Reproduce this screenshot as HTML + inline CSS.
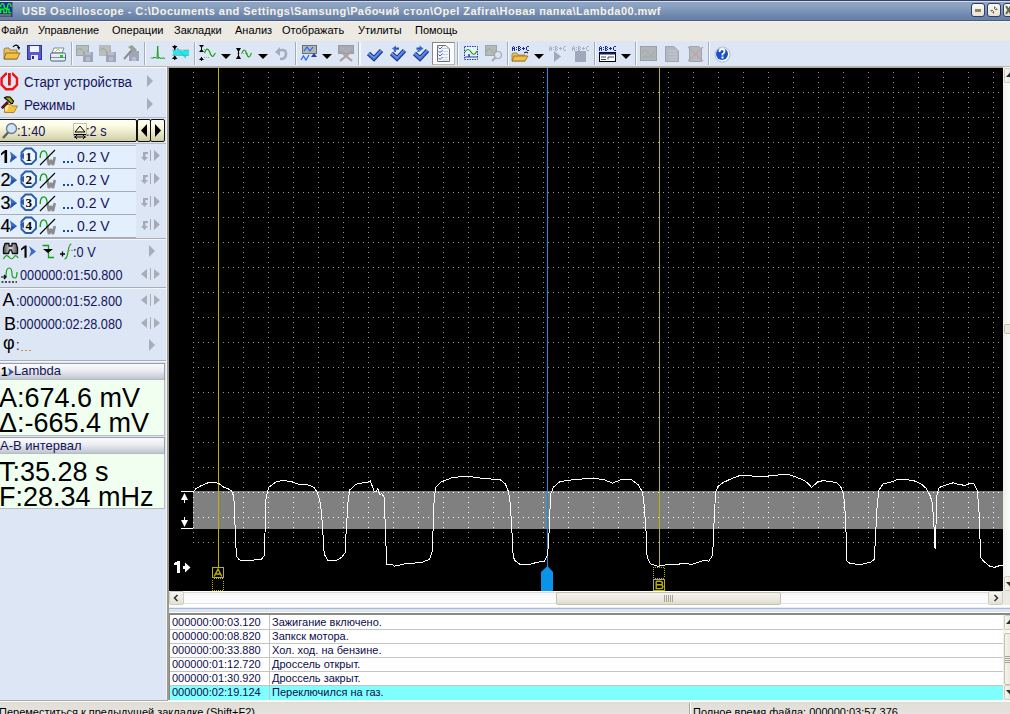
<!DOCTYPE html>
<html><head><meta charset="utf-8">
<style>
*{margin:0;padding:0;box-sizing:border-box}
html,body{width:1010px;height:714px;overflow:hidden;background:#eceae3;font-family:"Liberation Sans",sans-serif;position:relative}
.a{position:absolute}
.txt{color:#14145a;white-space:nowrap;line-height:16px}
.t15{font-size:15.5px;transform:scaleX(.82);transform-origin:0 0}
.mi{top:24px;font-size:11px;line-height:13px;color:#000;white-space:nowrap}
.sep{top:42px;width:1px;height:23px;background:#a4abba;border-right:1px solid #f8f9fc;width:2px}
.lt{font-size:11px;line-height:13px;color:#0c0c4c;white-space:nowrap}
.tbtn{top:3px;width:14px;height:14px;border:1px solid #2c3c6c;border-radius:3px;background:linear-gradient(#fbfaf4,#e6e2d2)}
</style></head><body>
<div class="a" style="left:0;top:0;width:1010px;height:21px;background:linear-gradient(#94a6c4 0%,#8aa2c0 30%,#7a92b6 55%,#6c84ac 80%,#6680a8 100%)"></div>
<div class="a" style="left:0;top:0;width:1010px;height:1px;background:#34445e"></div>
<div class="a" style="left:0;top:1px;width:1010px;height:1px;background:#d4dcf4"></div>
<div class="a" style="left:0;top:20px;width:1010px;height:1px;background:#465a80"></div>
<svg class="a" style="left:0;top:0" width="13" height="18" viewBox="0 0 13 18"><rect x="0" y="2" width="12.5" height="15" fill="#3a4058"/><rect x="0" y="2.5" width="11.5" height="11" fill="#0a2aa8"/><path d="M0.6,7 C0.6,2.5 4.2,2.5 4.2,7 C4.2,9 7.6,9 7.6,7 C7.6,2.5 11,2.5 11,7" stroke="#18f018" stroke-width="1.4" fill="none"/><path d="M0.7,13 V9.3 H3.8 V12.6 H6.6 V9.3 H9 V12.6 H11.2" stroke="#18f018" stroke-width="1.4" fill="none"/><rect x="0" y="14" width="11" height="2.5" fill="#6a6e78"/></svg>
<div class="a" style="left:22px;top:4px;font-size:11px;font-weight:bold;line-height:15px;color:#f6f2e6;white-space:nowrap;letter-spacing:0.46px">USB Oscilloscope - C:\Documents and Settings\Samsung\Рабочий стол\Opel Zafira\Новая папка\Lambda00.mwf</div>
<!-- buttons -->
<div class="a tbtn" style="left:971px"></div>
<div class="a" style="left:975px;top:9px;width:6px;height:3px;background:#8a8468"></div>
<div class="a tbtn" style="left:987px"></div>
<svg class="a" style="left:989px;top:5px" width="10" height="10" viewBox="0 0 10 10"><polygon points="5,1 9,5 5,5" fill="#6a6450"/><polygon points="1,5 5,5 5,9" fill="#6a6450"/><path d="M1,9 L9,1" stroke="#f0ece0" stroke-width="1"/></svg>
<div class="a tbtn" style="left:1003px"></div>
<svg class="a" style="left:1005px;top:5px" width="5" height="10" viewBox="0 0 5 10"><path d="M1,1 L6,9 M1,9 L6,1" stroke="#6a6450" stroke-width="2"/></svg>
<!-- menu -->
<div class="a" style="left:0;top:21px;width:1010px;height:20px;background:#eceae3"></div>
<div class="a" style="left:0;top:21px;width:1010px;height:1px;background:#f6f4ea"></div>
<div class="a mi" style="left:1px">Файл</div>
<div class="a mi" style="left:38px">Управление</div>
<div class="a mi" style="left:112px">Операции</div>
<div class="a mi" style="left:174px">Закладки</div>
<div class="a mi" style="left:235px">Анализ</div>
<div class="a mi" style="left:282px">Отображать</div>
<div class="a mi" style="left:358px">Утилиты</div>
<div class="a mi" style="left:415px">Помощь</div>

<div class="a" style="left:0;top:41px;width:1010px;height:25px;background:#dce6f4"></div>
<div class="a" style="left:0;top:66px;width:1010px;height:1px;background:#bcb8a8"></div>
<div class="a" style="left:0;top:67px;width:167px;height:1px;background:#fcfcfc"></div>
<div class="a" style="left:167px;top:67px;width:843px;height:1px;background:#aaa696"></div>
<!-- separators -->
<div class="a sep" style="left:71px"></div>
<div class="a sep" style="left:144px"></div>
<div class="a sep" style="left:194px"></div>
<div class="a sep" style="left:295px"></div>
<div class="a" style="left:358px;top:42px;width:1px;height:23px;background:#a4abba"></div>
<div class="a" style="left:359px;top:42px;width:2px;height:23px;background:#f4f6fa"></div>
<div class="a sep" style="left:457px"></div>
<div class="a sep" style="left:507px"></div>
<div class="a sep" style="left:594px"></div>
<div class="a sep" style="left:635px"></div>
<div class="a sep" style="left:708px"></div>
<!-- 1 open folder -->
<svg class="a" style="left:3px;top:44px" width="18" height="17" viewBox="0 0 18 17"><path d="M1,5 L1,15 L14,15 L14,6 L7,6 L6,4 L2,4 Z" fill="#e8c060" stroke="#8a7038" stroke-width="0.8"/><path d="M3,9 L17,9 L14,15 L1,15 Z" fill="#f4c040" stroke="#7a5a18" stroke-width="0.8"/><path d="M10,3 Q12,0 15,2 L16,4" stroke="#000" stroke-width="1.2" fill="none"/><polygon points="14,3 17,3 16,6" fill="#000"/></svg>
<!-- 2 floppy -->
<svg class="a" style="left:27px;top:45px" width="16" height="16" viewBox="0 0 16 16"><rect x="0.5" y="0.5" width="14" height="14" fill="#5a5ad0" stroke="#3030a0"/><rect x="3" y="1" width="9" height="6" fill="#f4f4fa"/><rect x="4" y="10" width="7" height="5" fill="#e8e8f0"/><rect x="5" y="11" width="2" height="3" fill="#303050"/></svg>
<!-- 3 printer -->
<svg class="a" style="left:50px;top:47px" width="16" height="15" viewBox="0 0 16 15"><polygon points="4,1 14,1 12,6 2,6" fill="#fff" stroke="#607090" stroke-width="0.8"/><path d="M5,5 L8,2 L10,4" stroke="#a0e020" stroke-width="1" fill="none"/><rect x="0.5" y="6" width="15" height="8" rx="1.5" fill="#e8ecf4" stroke="#506080"/><rect x="1" y="10" width="14" height="1" fill="#8090a8"/><rect x="10" y="8" width="3" height="3" fill="#10d010"/></svg>
<!-- 4 gray scope+floppy -->
<svg class="a" style="left:76px;top:45px" width="18" height="17" viewBox="0 0 18 17"><rect x="0.5" y="0.5" width="12" height="10" fill="#b8beba" stroke="#a0a6a4"/><path d="M1,6 Q3.5,1 6.5,5.5 T12,5" stroke="#9aa49a" fill="none"/><rect x="7" y="7" width="10" height="10" fill="#a0a6ba"/><rect x="9" y="7" width="6" height="3" fill="#b8bccc"/><rect x="10" y="12" width="4" height="4" fill="#b8bccc"/></svg>
<!-- 5 gray dotted scope+floppy -->
<svg class="a" style="left:99px;top:45px" width="18" height="17" viewBox="0 0 18 17"><rect x="0.5" y="0.5" width="11" height="10" fill="#b8beba" stroke="#a0a6a4" stroke-dasharray="1,1"/><path d="M1,6 Q3.5,1 6.5,5.5 T12,5" stroke="#9aa49a" fill="none"/><rect x="7" y="7" width="10" height="10" fill="#a0a6ba"/><rect x="9" y="7" width="6" height="3" fill="#b8bccc"/><rect x="10" y="12" width="4" height="4" fill="#b8bccc"/></svg>
<!-- 6 gray hammer+floppy -->
<svg class="a" style="left:123px;top:45px" width="18" height="17" viewBox="0 0 18 17"><rect x="6" y="6" width="10" height="10" fill="#a0a6ba"/><rect x="9" y="12" width="4" height="4" fill="#b8bccc"/><path d="M1,14 L9,5" stroke="#8a8e90" stroke-width="2"/><path d="M5,2 L9,0 L14,5 L11,7 Z" fill="#9aa090"/></svg>
<!-- 7 green peak -->
<svg class="a" style="left:150px;top:45px" width="16" height="16" viewBox="0 0 16 16"><path d="M1,13.5 L2,12.5 L3,13.5 L4,12 L5,13 L6,12.5 L7,13.5 L7.7,1 L8.3,13.5 L9,12 L10,13.5 L11,13 L12,13.5 L13,12.8 L15,13.5" stroke="#10a010" stroke-width="1" fill="none"/></svg>
<!-- 8 cyan -->
<svg class="a" style="left:171px;top:45px" width="19" height="16" viewBox="0 0 19 16"><path d="M2,6 H5 L6.5,3 L9,5 H13 V10.5 L14.5,13.5 L15.5,10.5 H18 V5 H2 Z" fill="#10f0f8"/><rect x="2" y="6" width="16" height="4.5" fill="#10f0f8"/><path d="M1,5.2 H18 M1,10.3 H18" stroke="#a08878" stroke-width="0.7"/><path d="M6,3 L9,6 L12,10 L14.5,13" stroke="#10c0c8" stroke-width="0.8" fill="none"/><polygon points="1,1 6.5,1 3.75,4.5" fill="#000"/><rect x="3.2" y="0" width="1.1" height="5" fill="#000"/><polygon points="1,14 6.5,14 3.75,10.5" fill="#000"/><rect x="3.2" y="11" width="1.1" height="4" fill="#000"/></svg>
<!-- 9 arrows+wave -->
<svg class="a" style="left:198px;top:44px" width="19" height="18" viewBox="0 0 19 18"><polygon points="1,1 6,1 3.5,4" fill="#000"/><polygon points="1,8 6,8 3.5,5" fill="#000"/><rect x="3" y="1" width="1" height="7" fill="#000"/><polygon points="1,16 6,16 3.5,13" fill="#000"/><rect x="3" y="13" width="1" height="4" fill="#000"/><path d="M6,5.5 H11 M6,13.5 H12" stroke="#909090" stroke-width="0.8" stroke-dasharray="1,1"/><path d="M6.5,9 Q9,2 11.5,7.5 Q14,15 16,11 L17.5,9" stroke="#10a010" stroke-width="1.2" fill="none"/></svg>
<svg class="a dd" style="left:221px;top:54px" width="10" height="5"><polygon points="0,0 10,0 5,5" fill="#000"/></svg>
<!-- 10 -->
<svg class="a" style="left:235px;top:48px" width="19" height="11" viewBox="0 0 19 11"><polygon points="1,0 6,0 3.5,4.5" fill="#000"/><polygon points="1,11 6,11 3.5,6.5" fill="#000"/><rect x="3" y="0" width="1" height="11" fill="#000"/><path d="M2,5.5 H14" stroke="#909090" stroke-width="0.8" stroke-dasharray="1,1"/><path d="M7,5 Q9,-0.5 11,4 Q13,11 15,8 L16.5,5" stroke="#10a010" stroke-width="1.1" fill="none"/></svg>
<svg class="a dd" style="left:258px;top:54px" width="10" height="5"><polygon points="0,0 10,0 5,5" fill="#000"/></svg>
<!-- 11 undo gray -->
<svg class="a" style="left:274px;top:46px" width="14" height="15" viewBox="0 0 14 15"><path d="M4,5 Q12,2 12,8 Q12,13 6,13" stroke="#a4acc0" stroke-width="2.6" fill="none"/><polygon points="1,6 6,1 6,10" fill="#a4acc0"/></svg>
<!-- 12 blue waves scope -->
<svg class="a" style="left:300px;top:45px" width="18" height="17" viewBox="0 0 18 17"><rect x="2.5" y="0.5" width="14" height="8" fill="#b4b4b4" stroke="#707070"/><path d="M4,6 L7,2 L10,6 L13,2" stroke="#1a6af0" stroke-width="1.2" fill="none"/><path d="M1,15 L3.5,11 L6,15 L9,10" stroke="#1a6af0" stroke-width="1.2" fill="none"/><polygon points="14,8 11,12 17,12" fill="#2a3ab0"/></svg>
<svg class="a dd" style="left:322px;top:54px" width="10" height="5"><polygon points="0,0 10,0 5,5" fill="#000"/></svg>
<!-- 13 gray X scope -->
<svg class="a" style="left:338px;top:45px" width="16" height="17" viewBox="0 0 16 17"><rect x="0.5" y="0.5" width="15" height="8" fill="#a8acb0" stroke="#989ca0"/><path d="M2,7 L5,3 L8,7 L11,3 L14,7" stroke="#a8b4d0" fill="none"/><path d="M2,16 L14,6 M2,6 L14,16" stroke="#b09c9c" stroke-width="2.2"/></svg>
<!-- 14 check -->
<svg class="a" style="left:366px;top:48px" width="18" height="15" viewBox="0 0 18 15"><defs><linearGradient id="chk" x1="0" y1="0" x2="0" y2="1"><stop offset="0" stop-color="#6a9ae8"/><stop offset="0.5" stop-color="#3a6ad0"/><stop offset="1" stop-color="#1a3ca8"/></linearGradient></defs><path d="M2.5,5.5 L8,10.5 L15.5,2.5" fill="none" stroke="#1c2e8c" stroke-width="4.6" stroke-linejoin="miter"/><path d="M2.5,5.5 L8,10.5 L15.5,2.5" fill="none" stroke="#4a7ad8" stroke-width="2.4" stroke-linejoin="miter"/><path d="M3,5.2 L8,9.6 L15,2.2" fill="none" stroke="#8ab4f0" stroke-width="0.8"/></svg>
<!-- 15 check left -->
<svg class="a" style="left:389px;top:45px" width="18" height="18" viewBox="0 0 18 18"><g transform="translate(0,3)"><path d="M2.5,5.5 L8,10.5 L15.5,2.5" fill="none" stroke="#1c2e8c" stroke-width="4.6" stroke-linejoin="miter"/><path d="M2.5,5.5 L8,10.5 L15.5,2.5" fill="none" stroke="#4a7ad8" stroke-width="2.4" stroke-linejoin="miter"/><path d="M3,5.2 L8,9.6 L15,2.2" fill="none" stroke="#8ab4f0" stroke-width="0.8"/></g><polygon points="3,3.5 7,0.5 7,6.5" fill="#3a6ad0"/><rect x="6.5" y="2.5" width="3.5" height="2.2" fill="#2a50b8"/><rect x="5" y="5" width="2" height="2" fill="#3a6ad0"/></svg>
<!-- 16 check right -->
<svg class="a" style="left:412px;top:45px" width="18" height="18" viewBox="0 0 18 18"><g transform="translate(0,3)"><path d="M2.5,5.5 L8,10.5 L15.5,2.5" fill="none" stroke="#1c2e8c" stroke-width="4.6" stroke-linejoin="miter"/><path d="M2.5,5.5 L8,10.5 L15.5,2.5" fill="none" stroke="#4a7ad8" stroke-width="2.4" stroke-linejoin="miter"/><path d="M3,5.2 L8,9.6 L15,2.2" fill="none" stroke="#8ab4f0" stroke-width="0.8"/></g><polygon points="11.5,3.5 7.5,0.5 7.5,6.5" fill="#3a6ad0"/><rect x="4.5" y="2.5" width="3.5" height="2.2" fill="#2a50b8"/><rect x="5.5" y="5" width="2" height="2" fill="#3a6ad0"/></svg>
<!-- 17 pressed doc button -->
<div class="a" style="left:432px;top:42px;width:23px;height:23px;background:#fdfdfd;border:1px solid #8a8a8a;border-right-color:#b8b8b8;border-bottom-color:#b8b8b8"></div>
<svg class="a" style="left:437px;top:45px" width="13" height="17" viewBox="0 0 13 17"><path d="M0.5,0.5 H9 L12.5,4 V16.5 H0.5 Z" fill="#f4f8fc" stroke="#707070"/><path d="M5,3.5 H11 M5,6.5 H11 M5,9.5 H11 M5,12.5 H11 M5,15 H11" stroke="#b8c8dc" stroke-width="0.8"/><path d="M1.5,2.5 L3,4 L5.5,1.5 M1.5,6 L3,7.5 L5.5,5 M1.5,9.5 L3,11 L5.5,8.5 M1.5,13 L3,14.5 L5.5,12" stroke="#2a4cc0" stroke-width="0.9" fill="none"/></svg>
<!-- 18 dotted box green wave -->
<svg class="a" style="left:463px;top:45px" width="16" height="16" viewBox="0 0 16 16"><rect x="1.5" y="1.5" width="13" height="13" fill="#fff" fill-opacity="0.4" stroke="#1a3ab0" stroke-dasharray="1.5,1"/><path d="M2,7 Q5,2 8,7 T14,6" stroke="#10a010" stroke-width="1.2" fill="none"/><path d="M2,12 H6 V9 V12 H14" stroke="#1a3ab0" stroke-width="1" fill="none"/></svg>
<!-- 19 gray magnifier -->
<svg class="a" style="left:485px;top:45px" width="18" height="17" viewBox="0 0 18 17"><rect x="0.5" y="0.5" width="11" height="10" fill="#b4bab8" stroke="#a0a6a4"/><path d="M1,7 Q4,1 7,6 T11,5" stroke="#9ca49c" fill="none"/><circle cx="13" cy="10" r="3.5" fill="#dce4f0" stroke="#a4aab4" stroke-width="1.2"/><path d="M10.5,12.5 L7,16" stroke="#a4aab4" stroke-width="2"/></svg>
<!-- 20 A:B+C folder -->
<svg class="a" style="left:511px;top:45px" width="19" height="17" viewBox="0 0 19 17"><path d="M1,0h1v1h-1zM0,1h1v1h-1zM2,1h1v1h-1zM0,2h1v1h-1zM1,2h1v1h-1zM2,2h1v1h-1zM0,3h1v1h-1zM2,3h1v1h-1zM0,4h1v1h-1zM2,4h1v1h-1zM4,1h1v1h-1zM4,3h1v1h-1zM6,0h1v1h-1zM7,0h1v1h-1zM6,1h1v1h-1zM8,1h1v1h-1zM6,2h1v1h-1zM7,2h1v1h-1zM6,3h1v1h-1zM8,3h1v1h-1zM6,4h1v1h-1zM7,4h1v1h-1zM11,1h1v1h-1zM10,2h1v1h-1zM11,2h1v1h-1zM12,2h1v1h-1zM11,3h1v1h-1zM15,0h1v1h-1zM16,0h1v1h-1zM14,1h1v1h-1zM14,2h1v1h-1zM14,3h1v1h-1zM15,4h1v1h-1zM16,4h1v1h-1z" fill="#1a2a98" transform="translate(1,1)"/><path d="M1,9 V16 H14 V10 H7 L6,8 H2 Z" fill="#e8c060" stroke="#8a7038" stroke-width="0.7"/><path d="M3,11 H17 L14,16 H1 Z" fill="#f4c040" stroke="#7a5a18" stroke-width="0.7"/><path d="M13,8 Q15,6 17,8" stroke="#000" stroke-width="1" fill="none"/></svg>
<svg class="a dd" style="left:534px;top:54px" width="10" height="5"><polygon points="0,0 10,0 5,5" fill="#000"/></svg>
<!-- 21 gray play -->
<svg class="a" style="left:548px;top:45px" width="19" height="17" viewBox="0 0 19 17"><path d="M1,0h1v1h-1zM0,1h1v1h-1zM2,1h1v1h-1zM0,2h1v1h-1zM1,2h1v1h-1zM2,2h1v1h-1zM0,3h1v1h-1zM2,3h1v1h-1zM0,4h1v1h-1zM2,4h1v1h-1zM4,1h1v1h-1zM4,3h1v1h-1zM6,0h1v1h-1zM7,0h1v1h-1zM6,1h1v1h-1zM8,1h1v1h-1zM6,2h1v1h-1zM7,2h1v1h-1zM6,3h1v1h-1zM8,3h1v1h-1zM6,4h1v1h-1zM7,4h1v1h-1zM11,1h1v1h-1zM10,2h1v1h-1zM11,2h1v1h-1zM12,2h1v1h-1zM11,3h1v1h-1zM15,0h1v1h-1zM16,0h1v1h-1zM14,1h1v1h-1zM14,2h1v1h-1zM14,3h1v1h-1zM15,4h1v1h-1zM16,4h1v1h-1z" fill="#a8b0c4" transform="translate(1,1)"/><polygon points="6,6 13,11.5 6,17" fill="#a0a8bc"/></svg>
<!-- 22 gray stop -->
<svg class="a" style="left:571px;top:45px" width="19" height="17" viewBox="0 0 19 17"><path d="M1,0h1v1h-1zM0,1h1v1h-1zM2,1h1v1h-1zM0,2h1v1h-1zM1,2h1v1h-1zM2,2h1v1h-1zM0,3h1v1h-1zM2,3h1v1h-1zM0,4h1v1h-1zM2,4h1v1h-1zM4,1h1v1h-1zM4,3h1v1h-1zM6,0h1v1h-1zM7,0h1v1h-1zM6,1h1v1h-1zM8,1h1v1h-1zM6,2h1v1h-1zM7,2h1v1h-1zM6,3h1v1h-1zM8,3h1v1h-1zM6,4h1v1h-1zM7,4h1v1h-1zM11,1h1v1h-1zM10,2h1v1h-1zM11,2h1v1h-1zM12,2h1v1h-1zM11,3h1v1h-1zM15,0h1v1h-1zM16,0h1v1h-1zM14,1h1v1h-1zM14,2h1v1h-1zM14,3h1v1h-1zM15,4h1v1h-1zM16,4h1v1h-1z" fill="#a8b0c4" transform="translate(1,1)"/><rect x="4" y="6" width="11" height="11" fill="#a0a8bc"/></svg>
<!-- 23 A:B+C window -->
<svg class="a" style="left:598px;top:45px" width="19" height="17" viewBox="0 0 19 17"><path d="M1,0h1v1h-1zM0,1h1v1h-1zM2,1h1v1h-1zM0,2h1v1h-1zM1,2h1v1h-1zM2,2h1v1h-1zM0,3h1v1h-1zM2,3h1v1h-1zM0,4h1v1h-1zM2,4h1v1h-1zM4,1h1v1h-1zM4,3h1v1h-1zM6,0h1v1h-1zM7,0h1v1h-1zM6,1h1v1h-1zM8,1h1v1h-1zM6,2h1v1h-1zM7,2h1v1h-1zM6,3h1v1h-1zM8,3h1v1h-1zM6,4h1v1h-1zM7,4h1v1h-1zM11,1h1v1h-1zM10,2h1v1h-1zM11,2h1v1h-1zM12,2h1v1h-1zM11,3h1v1h-1zM15,0h1v1h-1zM16,0h1v1h-1zM14,1h1v1h-1zM14,2h1v1h-1zM14,3h1v1h-1zM15,4h1v1h-1zM16,4h1v1h-1z" fill="#1a2a98" transform="translate(1,1)"/><rect x="1.5" y="7.5" width="16" height="9" fill="#fff" stroke="#000"/><rect x="1.5" y="7.5" width="16" height="2" fill="#102060"/><path d="M3,12 H8 M3,14.5 H8 M10,14.5 V12 H16" stroke="#404040" stroke-width="1" fill="none"/></svg>
<svg class="a dd" style="left:621px;top:54px" width="10" height="5"><polygon points="0,0 10,0 5,5" fill="#000"/></svg>
<!-- 24 gray scope -->
<svg class="a" style="left:640px;top:46px" width="17" height="15" viewBox="0 0 17 15"><rect x="0.5" y="0.5" width="16" height="14" fill="#b0b6b8" stroke="#9aa0a4"/><path d="M2,7 Q5,1 8,7 T15,5" stroke="#a0b0a0" fill="none"/><path d="M2,11 H6 V9 V11 H15" stroke="#a0a8b8" fill="none"/></svg>
<!-- 25 gray doc -->
<svg class="a" style="left:665px;top:46px" width="14" height="16" viewBox="0 0 14 16"><path d="M0.5,0.5 H9 L13.5,5 V15.5 H0.5 Z" fill="#b4b8c0" stroke="#a0a4ac"/><path d="M4,5 H12 M4,8 H12 M4,11 H12 M4,14 H12" stroke="#c8ccd4" stroke-width="0.8"/></svg>
<!-- 26 gray doc X -->
<svg class="a" style="left:687px;top:46px" width="17" height="16" viewBox="0 0 17 16"><path d="M2.5,0.5 H12 L14.5,3 V15.5 H2.5 Z" fill="#b4b8c0" stroke="#a0a4ac"/><path d="M1,15 L16,1 M1,1 L16,15" stroke="#c0a4a4" stroke-width="1.3"/></svg>
<!-- 27 help -->
<svg class="a" style="left:714px;top:46px" width="17" height="17" viewBox="0 0 17 17"><circle cx="8.5" cy="8.5" r="7.5" fill="#fff" stroke="#a0a8b8" stroke-width="0.8"/><circle cx="8" cy="8" r="6" fill="#1c50c8"/><path d="M5.5,6 Q5.5,3 8,3 Q10.5,3 10.5,5.5 Q10.5,7 8.5,8 V9.5" stroke="#fff" stroke-width="1.8" fill="none"/><rect x="7.5" y="10.5" width="2" height="2" fill="#fff"/></svg>

<div class="a" style="left:0;top:68px;width:167px;height:632px;background:#dce6f4"></div>
<div class="a" style="left:166px;top:68px;width:1px;height:632px;background:#f4f6fa"></div>
<div class="a" style="left:167px;top:68px;width:2px;height:632px;background:#9c9a8c"></div>
<!-- Start / modes -->
<svg class="a" style="left:0px;top:72px" width="19" height="19" viewBox="0 0 19 19"><polygon points="6,1.8 12.6,1.8 17,6.2 17,12.8 12.6,17.2 6,17.2 1.6,12.8 1.6,6.2" fill="none" stroke="#f41010" stroke-width="2.4"/><rect x="7" y="0" width="5" height="5" fill="#dce6f4"/><rect x="8" y="1" width="2.8" height="12.5" fill="#e80c0c"/></svg>
<div class="a txt t15" style="left:24px;top:74px;transform:scaleX(.855)">Старт устройства</div>
<svg class="a" style="left:146px;top:75px" width="8" height="12"><polygon points="1,0 7,6 1,12" fill="#a8aeb8"/></svg>
<svg class="a" style="left:0px;top:94px" width="20" height="20" viewBox="0 0 20 20"><path d="M4.5,104.5 H11 L13,106 H17.5 L14,112.5 H4.5 Z" transform="translate(0,-94)" fill="#f2c440" stroke="#9a7418" stroke-width="0.8"/><path d="M5,105 L9,105 L7,111 H5Z" transform="translate(0,-94)" fill="#fae890"/><path d="M1.8,14.2 L8,8" stroke="#000" stroke-width="2.6"/><path d="M1.8,14.2 L8,8" stroke="#b01010" stroke-width="1.1"/><path d="M4.5,3.8 L6.5,2.8 L10,3 L13.5,7.2 L12.5,9.5 L11,9.5 L8.5,6.8 L6.5,5.5 Z" fill="#9aa412" stroke="#000" stroke-width="1.1"/></svg>
<div class="a txt t15" style="left:24px;top:97px;transform:scaleX(.87)">Режимы</div>
<svg class="a" style="left:146px;top:98px" width="8" height="12"><polygon points="1,0 7,6 1,12" fill="#a8aeb8"/></svg>
<div class="a" style="left:0;top:117px;width:166px;height:1px;background:#b8bcc4"></div>
<!-- zoom bar -->
<div class="a" style="left:-3px;top:119px;width:140px;height:23px;border:1px solid #101010;border-radius:2px;background:linear-gradient(#fffff4,#fdfde6 25%,#ecebcb 55%,#dad8b2 85%,#cecca6)"></div>
<div class="a" style="left:137px;top:119px;width:14px;height:23px;border:1px solid #101010;border-radius:2px;background:linear-gradient(#fffff4,#fdfde6 25%,#ecebcb 55%,#dad8b2 85%,#cecca6)"></div>
<div class="a" style="left:150px;top:119px;width:15px;height:23px;border:1px solid #101010;border-radius:2px;background:linear-gradient(#fffff4,#fdfde6 25%,#ecebcb 55%,#dad8b2 85%,#cecca6)"></div>
<svg class="a" style="left:140px;top:124px" width="8" height="13"><polygon points="7,0 1,6.5 7,13" fill="#000"/></svg>
<svg class="a" style="left:154px;top:124px" width="8" height="13"><polygon points="1,0 7,6.5 1,13" fill="#000"/></svg>
<svg class="a" style="left:1px;top:122px" width="17" height="18" viewBox="0 0 17 18"><circle cx="10.5" cy="6.5" r="5" fill="#cfe4f8" stroke="#6a7a90" stroke-width="1.3"/><path d="M2,16 L7,10.5" stroke="#606060" stroke-width="2.5"/></svg>
<div class="a txt t15" style="left:17px;top:123px;">:1:40</div>
<svg class="a" style="left:73px;top:123px" width="14" height="17" viewBox="0 0 14 17"><rect x="0.5" y="0.5" width="13" height="12" fill="none" stroke="#808080" stroke-dasharray="1,1"/><polygon points="7,3 12,9 2,9" fill="none" stroke="#000"/><path d="M1,11.5 H13 M1,14 H13 M2,14 L4,12 M2,14 L4,16 M12,14 L10,12 M12,14 L10,16" stroke="#000" fill="none"/></svg>
<div class="a txt t15" style="left:86px;top:123px;">:2 s</div>
<div class="a" style="left:0;top:143px;width:166px;height:1px;background:#b8bcc4"></div>

<div class="a" style="left:0;top:145px;width:136px;height:23px;background:#e3effc;border-top:1px solid #a9adb5"></div>
<div class="a" style="left:0;top:168px;width:136px;height:1px;background:#a9adb5"></div>
<svg class="a" style="left:0;top:145px" width="10" height="22" viewBox="0 0 10 22"><path d="M4.5,5 h2.6 v13 h-2.6 z M4.6,5 L1,8.6 V10.4 L4.6,7.8 Z" fill="#000"/></svg>
<svg class="a" style="left:9px;top:151px" width="9" height="12" viewBox="0 0 9 12"><polygon points="1,0.5 8,6 1,11.5 2.2,6" fill="#3a6cc0"/><polygon points="2.2,6 8,6 1,11.5" fill="#2a54a8"/></svg>
<svg class="a" style="left:19px;top:147px" width="19" height="19" viewBox="0 0 19 19"><polygon points="6.5,1.5 12.5,1.5 17,6 17,12.5 12.5,17 6.5,17 2.5,13 2.5,5.5" fill="#fafcff" fill-opacity="0.5" stroke="#2c5cac" stroke-width="1.9"/><polygon points="1,9 5,5.5 5,12.5" fill="#2c5cac"/></svg>
<div class="a" style="left:25.5px;top:150px;font-size:13px;font-weight:bold;line-height:14px;color:#000;font-family:'Liberation Serif'">1</div>
<svg class="a" style="left:39px;top:148px" width="17" height="18" viewBox="0 0 17 18"><path d="M1.2,10 C1.2,0.5 8.2,0.5 8.2,9.5" stroke="#10a010" stroke-width="1.3" fill="none"/><path d="M8.2,9 L10,17 L12,12 L14,17 L15.8,9" stroke="#8c8c8c" stroke-width="2.6" fill="none" stroke-linejoin="bevel"/><path d="M1,17 L16,2" stroke="#000" stroke-width="1.1"/></svg>
<div class="a" style="left:63px;top:161px;width:11px;height:2px;background:repeating-linear-gradient(90deg,#1a4aa0 0 2px,transparent 2px 4px)"></div>
<div class="a txt t15" style="left:77px;top:149px;transform:scaleX(.9)">0.2 V</div>
<svg class="a" style="left:140px;top:149px" width="22" height="14" viewBox="0 0 22 14"><path d="M3,3 H8 V5 H5.5 V8 H8 L4.5,12 L1,8 H3 Z" fill="#a4abb6"/><rect x="10" y="1" width="1" height="11" fill="#a4abb6"/><polygon points="14,1 19.8,6.5 14,12" fill="#a4abb6"/></svg>
<div class="a" style="left:0;top:168px;width:136px;height:23px;background:#e3effc;border-top:1px solid #a9adb5"></div>
<div class="a" style="left:0;top:191px;width:136px;height:1px;background:#a9adb5"></div>
<svg class="a" style="left:0;top:168px" width="10" height="22" viewBox="0 0 10 22"><text x="0.5" y="18" font-family="Liberation Sans" font-size="18" fill="#000" stroke="#000" stroke-width="0.2">2</text></svg>
<svg class="a" style="left:9px;top:174px" width="9" height="12" viewBox="0 0 9 12"><polygon points="1,0.5 8,6 1,11.5 2.2,6" fill="#3a6cc0"/><polygon points="2.2,6 8,6 1,11.5" fill="#2a54a8"/></svg>
<svg class="a" style="left:19px;top:170px" width="19" height="19" viewBox="0 0 19 19"><polygon points="6.5,1.5 12.5,1.5 17,6 17,12.5 12.5,17 6.5,17 2.5,13 2.5,5.5" fill="#fafcff" fill-opacity="0.5" stroke="#2c5cac" stroke-width="1.9"/><polygon points="1,9 5,5.5 5,12.5" fill="#2c5cac"/></svg>
<div class="a" style="left:25.5px;top:173px;font-size:13px;font-weight:bold;line-height:14px;color:#000;font-family:'Liberation Serif'">2</div>
<svg class="a" style="left:39px;top:171px" width="17" height="18" viewBox="0 0 17 18"><path d="M1.2,10 C1.2,0.5 8.2,0.5 8.2,9.5" stroke="#10a010" stroke-width="1.3" fill="none"/><path d="M8.2,9 L10,17 L12,12 L14,17 L15.8,9" stroke="#8c8c8c" stroke-width="2.6" fill="none" stroke-linejoin="bevel"/><path d="M1,17 L16,2" stroke="#000" stroke-width="1.1"/></svg>
<div class="a" style="left:63px;top:184px;width:11px;height:2px;background:repeating-linear-gradient(90deg,#1a4aa0 0 2px,transparent 2px 4px)"></div>
<div class="a txt t15" style="left:77px;top:172px;transform:scaleX(.9)">0.2 V</div>
<svg class="a" style="left:140px;top:172px" width="22" height="14" viewBox="0 0 22 14"><path d="M3,3 H8 V5 H5.5 V8 H8 L4.5,12 L1,8 H3 Z" fill="#a4abb6"/><rect x="10" y="1" width="1" height="11" fill="#a4abb6"/><polygon points="14,1 19.8,6.5 14,12" fill="#a4abb6"/></svg>
<div class="a" style="left:0;top:191px;width:136px;height:23px;background:#e3effc;border-top:1px solid #a9adb5"></div>
<div class="a" style="left:0;top:214px;width:136px;height:1px;background:#a9adb5"></div>
<svg class="a" style="left:0;top:191px" width="10" height="22" viewBox="0 0 10 22"><text x="0.5" y="18" font-family="Liberation Sans" font-size="18" fill="#000" stroke="#000" stroke-width="0.2">3</text></svg>
<svg class="a" style="left:9px;top:197px" width="9" height="12" viewBox="0 0 9 12"><polygon points="1,0.5 8,6 1,11.5 2.2,6" fill="#3a6cc0"/><polygon points="2.2,6 8,6 1,11.5" fill="#2a54a8"/></svg>
<svg class="a" style="left:19px;top:193px" width="19" height="19" viewBox="0 0 19 19"><polygon points="6.5,1.5 12.5,1.5 17,6 17,12.5 12.5,17 6.5,17 2.5,13 2.5,5.5" fill="#fafcff" fill-opacity="0.5" stroke="#2c5cac" stroke-width="1.9"/><polygon points="1,9 5,5.5 5,12.5" fill="#2c5cac"/></svg>
<div class="a" style="left:25.5px;top:196px;font-size:13px;font-weight:bold;line-height:14px;color:#000;font-family:'Liberation Serif'">3</div>
<svg class="a" style="left:39px;top:194px" width="17" height="18" viewBox="0 0 17 18"><path d="M1.2,10 C1.2,0.5 8.2,0.5 8.2,9.5" stroke="#10a010" stroke-width="1.3" fill="none"/><path d="M8.2,9 L10,17 L12,12 L14,17 L15.8,9" stroke="#8c8c8c" stroke-width="2.6" fill="none" stroke-linejoin="bevel"/><path d="M1,17 L16,2" stroke="#000" stroke-width="1.1"/></svg>
<div class="a" style="left:63px;top:207px;width:11px;height:2px;background:repeating-linear-gradient(90deg,#1a4aa0 0 2px,transparent 2px 4px)"></div>
<div class="a txt t15" style="left:77px;top:195px;transform:scaleX(.9)">0.2 V</div>
<svg class="a" style="left:140px;top:195px" width="22" height="14" viewBox="0 0 22 14"><path d="M3,3 H8 V5 H5.5 V8 H8 L4.5,12 L1,8 H3 Z" fill="#a4abb6"/><rect x="10" y="1" width="1" height="11" fill="#a4abb6"/><polygon points="14,1 19.8,6.5 14,12" fill="#a4abb6"/></svg>
<div class="a" style="left:0;top:214px;width:136px;height:23px;background:#e3effc;border-top:1px solid #a9adb5"></div>
<div class="a" style="left:0;top:237px;width:136px;height:1px;background:#a9adb5"></div>
<svg class="a" style="left:0;top:214px" width="10" height="22" viewBox="0 0 10 22"><text x="0.5" y="18" font-family="Liberation Sans" font-size="18" fill="#000" stroke="#000" stroke-width="0.2">4</text></svg>
<svg class="a" style="left:9px;top:220px" width="9" height="12" viewBox="0 0 9 12"><polygon points="1,0.5 8,6 1,11.5 2.2,6" fill="#3a6cc0"/><polygon points="2.2,6 8,6 1,11.5" fill="#2a54a8"/></svg>
<svg class="a" style="left:19px;top:216px" width="19" height="19" viewBox="0 0 19 19"><polygon points="6.5,1.5 12.5,1.5 17,6 17,12.5 12.5,17 6.5,17 2.5,13 2.5,5.5" fill="#fafcff" fill-opacity="0.5" stroke="#2c5cac" stroke-width="1.9"/><polygon points="1,9 5,5.5 5,12.5" fill="#2c5cac"/></svg>
<div class="a" style="left:25.5px;top:219px;font-size:13px;font-weight:bold;line-height:14px;color:#000;font-family:'Liberation Serif'">4</div>
<svg class="a" style="left:39px;top:217px" width="17" height="18" viewBox="0 0 17 18"><path d="M1.2,10 C1.2,0.5 8.2,0.5 8.2,9.5" stroke="#10a010" stroke-width="1.3" fill="none"/><path d="M8.2,9 L10,17 L12,12 L14,17 L15.8,9" stroke="#8c8c8c" stroke-width="2.6" fill="none" stroke-linejoin="bevel"/><path d="M1,17 L16,2" stroke="#000" stroke-width="1.1"/></svg>
<div class="a" style="left:63px;top:230px;width:11px;height:2px;background:repeating-linear-gradient(90deg,#1a4aa0 0 2px,transparent 2px 4px)"></div>
<div class="a txt t15" style="left:77px;top:218px;transform:scaleX(.9)">0.2 V</div>
<svg class="a" style="left:140px;top:218px" width="22" height="14" viewBox="0 0 22 14"><path d="M3,3 H8 V5 H5.5 V8 H8 L4.5,12 L1,8 H3 Z" fill="#a4abb6"/><rect x="10" y="1" width="1" height="11" fill="#a4abb6"/><polygon points="14,1 19.8,6.5 14,12" fill="#a4abb6"/></svg>
<div class="a" style="left:0;top:238px;width:166px;height:1px;background:#a9adb5"></div>
<div class="a" style="left:0;top:239px;width:166px;height:1px;background:#f4f6fa"></div>
<!-- trigger row -->
<svg class="a" style="left:2px;top:242px" width="17" height="19" viewBox="0 0 17 19"><defs><linearGradient id="bn" x1="0" x2="1"><stop offset="0" stop-color="#505050"/><stop offset="0.5" stop-color="#d8d8d8"/><stop offset="1" stop-color="#505050"/></linearGradient></defs><path d="M3,1.5 H7 V4 H10 V1.5 H14 L15.5,6 V11.5 H10.5 L9.5,8 H7.5 L6.5,11.5 H1.5 V6 Z" fill="url(#bn)" stroke="#101010" stroke-width="1.3" stroke-linejoin="round"/><path d="M1.5,17 Q4,11.5 7,15 Q9.5,18.5 12,15 Q14,12 16,16" stroke="#10a010" stroke-width="1.2" fill="none"/></svg>
<svg class="a" style="left:20px;top:245px" width="8" height="13" viewBox="0 0 8 13"><path d="M4.5,0.5 h2.1 v12.3 h-2.1 z M4.6,0.5 L1,3.8 V5.4 L4.6,3 Z" fill="#000"/></svg>
<svg class="a" style="left:29px;top:246px" width="8" height="11" viewBox="0 0 8 11"><polygon points="0,0 7,5.5 0,11 2,5.5" fill="#3a6cc0"/></svg>
<svg class="a" style="left:41px;top:244px" width="14" height="15" viewBox="0 0 14 15"><path d="M1.5,1.5 H7.5 V13.5 H13" stroke="#10a010" stroke-width="1.3" fill="none"/><polygon points="2,5 12,5 7,9" fill="#000"/></svg>
<svg class="a" style="left:59px;top:243px" width="17" height="17" viewBox="0 0 17 17"><path d="M5.5,16 Q8,16 9,9 Q10,1 12.5,1" stroke="#10a010" stroke-width="1.2" fill="none"/><path d="M1,11 H6 M3.5,8.5 V13.5" stroke="#000" stroke-width="1.3"/><path d="M9,7.5 H16" stroke="#909090" stroke-width="1" stroke-dasharray="2,1"/></svg>
<div class="a txt t15" style="left:73px;top:244px;">:0 V</div>
<svg class="a" style="left:148px;top:245px" width="8" height="12"><polygon points="1,0 7,6 1,12" fill="#a8aeb8"/></svg>
<!-- position row -->
<svg class="a" style="left:0px;top:266px" width="19" height="18" viewBox="0 0 19 18"><path d="M6,11 Q6,2 9,2 Q12,2 12,8 Q12,12 15,12 Q17,12 17,6" stroke="#10a010" stroke-width="1.2" fill="none"/><path d="M1,11 H6 M4,9 L6,11 L4,13" stroke="#000" stroke-width="1.2" fill="none"/><path d="M1.5,16 H17" stroke="#505050" stroke-width="2" stroke-dasharray="2,1.5"/></svg>
<div class="a txt t15" style="left:20px;top:267px;">000000:01:50.800</div>
<svg class="a" style="left:140px;top:268px" width="22" height="12" viewBox="0 0 22 12"><polygon points="7,1 1,6 7,11" fill="#a8aeb8"/><rect x="10" y="0" width="1" height="12" fill="#a8aeb8"/><polygon points="14,1 20,6 14,11" fill="#a8aeb8"/></svg>
<div class="a" style="left:0;top:287px;width:166px;height:1px;background:#a9adb5"></div>
<div class="a" style="left:0;top:288px;width:166px;height:1px;background:#f4f6fa"></div>
<!-- A B phi -->
<div class="a" style="left:2.5px;top:290px;font-size:18px;line-height:20px;color:#000">A</div>
<div class="a txt t15" style="left:16px;top:293px;">:000000:01:52.800</div>
<svg class="a" style="left:140px;top:294px" width="22" height="12" viewBox="0 0 22 12"><polygon points="7,1 1,6 7,11" fill="#a8aeb8"/><rect x="10" y="0" width="1" height="12" fill="#a8aeb8"/><polygon points="14,1 20,6 14,11" fill="#a8aeb8"/></svg>
<div class="a" style="left:4px;top:314px;font-size:18px;line-height:20px;color:#000">B</div>
<div class="a txt t15" style="left:16px;top:316px;">:000000:02:28.080</div>
<svg class="a" style="left:140px;top:317px" width="22" height="12" viewBox="0 0 22 12"><polygon points="7,1 1,6 7,11" fill="#a8aeb8"/><rect x="10" y="0" width="1" height="12" fill="#a8aeb8"/><polygon points="14,1 20,6 14,11" fill="#a8aeb8"/></svg>
<div class="a" style="left:3px;top:333px;font-size:18px;line-height:20px;color:#000">φ</div>
<div class="a txt t15" style="left:16px;top:337px;">:</div>
<div class="a" style="left:21px;top:350px;width:11px;height:1px;background:repeating-linear-gradient(90deg,#d89020 0 2px,transparent 2px 4px)"></div>
<svg class="a" style="left:148px;top:339px" width="8" height="12"><polygon points="1,0 7,6 1,12" fill="#a8aeb8"/></svg>
<div class="a" style="left:0;top:360px;width:166px;height:1px;background:#a9adb5"></div>
<div class="a" style="left:0;top:361px;width:166px;height:1px;background:#f4f6fa"></div>
<!-- Lambda panel -->
<div class="a" style="left:-2px;top:363px;width:167px;height:18px;border:1px solid #9a9ea8;background:linear-gradient(#fbfbfc,#eceef2 40%,#c4c8d0 90%,#b0b4bc)"></div>
<div class="a" style="left:1px;top:365px;font-size:12px;line-height:14px;font-weight:bold;color:#000">1</div>
<svg class="a" style="left:8px;top:368px" width="6" height="8" viewBox="0 0 6 8"><polygon points="0,0 6,4 0,8 1.5,4" fill="#2a5ab0"/></svg>
<div class="a txt" style="left:14px;top:364px;font-size:13px;line-height:14px">Lambda</div>
<div class="a" style="left:-2px;top:380px;width:167px;height:56px;border:1px solid #b8bcc0;border-top:none;background:#f0fff0"></div>
<div class="a" style="left:-1px;top:385px;font-size:27px;line-height:27px;color:#000">A:674.6 mV</div>
<div class="a" style="left:-1px;top:410px;font-size:27px;line-height:27px;color:#000">Δ:-665.4 mV</div>
<!-- A-B panel -->
<div class="a" style="left:-2px;top:437px;width:167px;height:18px;border:1px solid #9a9ea8;background:linear-gradient(#fbfbfc,#eceef2 40%,#c4c8d0 90%,#b0b4bc)"></div>
<div class="a txt" style="left:0px;top:439px;font-size:13px;line-height:14px">A-B интервал</div>
<div class="a" style="left:-2px;top:454px;width:167px;height:55px;border:1px solid #b8bcc0;border-top:none;background:#f0fff0"></div>
<div class="a" style="left:-1px;top:459px;font-size:27px;line-height:27px;color:#000">T:35.28 s</div>
<div class="a" style="left:-1px;top:484px;font-size:27px;line-height:27px;color:#000">F:28.34 mHz</div>

<svg id="scope" class="a" width="834" height="523" viewBox="0 0 834 523" style="left:169px;top:68px;background:#000" shape-rendering="crispEdges">
<defs>
<pattern id="grid" x="24" y="-1" width="25" height="25" patternUnits="userSpaceOnUse">
<rect x="0" y="0" width="1" height="1" fill="#969696"/><rect x="5" y="0" width="1" height="1" fill="#969696"/><rect x="10" y="0" width="1" height="1" fill="#969696"/><rect x="15" y="0" width="1" height="1" fill="#969696"/><rect x="20" y="0" width="1" height="1" fill="#969696"/>
<rect x="0" y="5" width="1" height="1" fill="#969696"/><rect x="0" y="10" width="1" height="1" fill="#969696"/><rect x="0" y="15" width="1" height="1" fill="#969696"/><rect x="0" y="20" width="1" height="1" fill="#969696"/>
</pattern>
<pattern id="gridw" x="24" y="-1" width="25" height="25" patternUnits="userSpaceOnUse">
<rect x="0" y="0" width="1" height="1" fill="#ffffff"/><rect x="5" y="0" width="1" height="1" fill="#ffffff"/><rect x="10" y="0" width="1" height="1" fill="#ffffff"/><rect x="15" y="0" width="1" height="1" fill="#ffffff"/><rect x="20" y="0" width="1" height="1" fill="#ffffff"/>
<rect x="0" y="5" width="1" height="1" fill="#ffffff"/><rect x="0" y="10" width="1" height="1" fill="#ffffff"/><rect x="0" y="15" width="1" height="1" fill="#ffffff"/><rect x="0" y="20" width="1" height="1" fill="#ffffff"/>
</pattern>
</defs>
<rect x="24" y="423" width="810" height="38" fill="#808080"/>
<rect x="24" y="0" width="810" height="475" fill="url(#grid)"/>
<rect x="24" y="423" width="810" height="38" fill="url(#gridw)"/>
<!-- band arrows -->
<g fill="#fff">
<rect x="12" y="423" width="12" height="1"/>
<rect x="12" y="460" width="12" height="1"/>
<polygon points="15.5,425 12,432 19,432" shape-rendering="auto"/>
<rect x="15" y="431" width="1" height="4"/>
<polygon points="15.5,459 12,452 19,452" shape-rendering="auto"/>
<rect x="15" y="449" width="1" height="4"/>
</g>
<!-- cursor lines -->
<rect x="49" y="0" width="1" height="499" fill="#bcb200"/>
<rect x="490" y="0" width="1" height="499" fill="#bcb200"/>
<rect x="378" y="0" width="1" height="500" fill="#0894e8"/>
<polygon points="378.5,498 384,504 384,523 372,523 372,504" fill="#0894e8" shape-rendering="auto"/>
<!-- waveform -->
<polyline points="24.5,424.0 26.5,421.0 31.5,418.0 38.5,415.0 47.0,414.7 50.5,416.0 54.5,419.0 59.5,421.0 62.5,423.0 64.5,427.5 65.5,438.0 66.5,475.0 68.0,489.0 70.5,492.0 79.5,492.7 92.5,491.0 95.5,487.6 96.2,456.6 97.1,429.0 99.9,419.3 107.1,413.8 112.5,412.6 121.5,413.3 130.5,416.6 137.9,416.6 145.2,419.3 147.9,423.9 150.5,431.0 152.5,444.0 154.3,471.0 155.2,486.0 158.8,492.7 167.0,492.7 172.5,489.4 176.1,485.0 177.0,466.0 178.9,435.0 180.7,422.0 187.1,416.2 196.2,414.4 198.0,414.8 201.3,412.6 205.3,423.9 207.1,423.5 208.9,420.2 210.8,426.6 212.6,425.7 215.3,429.3 216.2,456.6 217.7,496.7 223.5,496.3 225.3,498.2 236.3,495.8 241.5,495.3 252.4,494.5 260.6,491.3 263.0,484.0 264.3,456.6 265.2,429.3 267.0,419.3 272.5,413.8 283.4,409.6 294.3,408.4 303.4,408.9 316.2,410.7 330.8,411.5 336.2,415.7 338.9,422.0 340.8,431.0 342.6,456.6 343.9,484.0 345.3,492.2 350.8,496.3 361.5,496.3 367.0,494.5 375.2,493.1 378.3,487.6 379.7,474.9 380.6,447.5 381.9,425.7 384.3,419.3 390.6,413.8 401.6,412.0 421.6,410.2 434.4,411.5 443.5,415.1 452.6,411.5 461.7,411.1 469.0,416.6 473.5,423.9 475.3,438.4 477.2,465.8 478.1,489.4 481.5,495.8 488.8,498.2 492.4,497.6 499.7,496.3 517.9,495.8 523.4,496.3 534.3,492.5 539.8,493.1 543.4,487.6 544.3,474.9 545.3,447.5 546.7,423.9 548.9,418.4 554.4,414.4 563.5,410.2 570.8,407.5 578.0,407.5 590.8,408.9 601.5,407.8 617.9,406.0 625.2,408.4 634.3,412.0 638.8,415.1 642.5,419.3 648.9,413.8 654.3,412.6 667.1,414.4 671.6,418.4 674.4,425.7 675.8,438.4 677.1,465.8 678.0,493.1 681.6,495.8 692.6,496.3 701.7,494.0 705.3,491.3 706.2,474.9 708.1,438.4 709.9,422.0 714.4,415.7 721.5,414.4 727.0,412.0 734.3,411.1 745.2,412.9 752.5,416.2 757.0,420.2 760.7,426.6 763.4,434.8 764.9,456.6 766.1,481.2 767.0,456.6 767.9,427.5 769.8,420.2 772.5,418.4 778.0,416.6 784.3,414.8 787.1,415.8 796.2,417.5 801.6,415.1 805.3,416.2 808.0,422.0 809.8,438.4 810.8,465.8 811.7,489.4 814.4,493.1 820.8,498.2 825.3,499.4 830.8,497.6 834.5,497.1" fill="none" stroke="#fff" stroke-width="1" shape-rendering="crispEdges"/>
<!-- A cursor label -->
<g fill="none" stroke="#bcb200" stroke-width="1">
<rect x="43.5" y="499.5" width="11" height="10" rx="1"/>
<path d="M43.5,512 V522.5 H54.5 V512" stroke-dasharray="1,1"/>
<path d="M484.5,510 V499.5 H495.5 V510" stroke-dasharray="1,1"/>
<rect x="484.5" y="511.5" width="11" height="11" rx="1"/>
</g>
<path d="M45.2,508.5 L49,501 L52.8,508.5 M46.5,506 H51.5" stroke="#bcb200" stroke-width="1.4" fill="none" shape-rendering="auto"/>
<path d="M487.2,513.2 H491.2 Q493.4,513.2 493.4,515.2 Q493.4,516.8 491.2,516.8 H487.2 M491.2,516.8 Q493.9,516.8 493.9,518.8 Q493.9,520.6 491.2,520.6 H487.2 V513.2" stroke="#bcb200" stroke-width="1.4" fill="none" shape-rendering="auto"/>
<path d="M45,510.5 H54 M486,510.5 H495" stroke="#bcb200" stroke-width="1" stroke-dasharray="1,1"/>
<!-- 1> marker -->
<g fill="#fff"><rect x="8" y="493" width="3" height="12"/><rect x="5" y="495" width="3" height="2"/><rect x="6" y="494" width="2" height="1"/>
<rect x="14" y="498" width="3" height="3"/><polygon points="16,494.5 21.5,499.5 16,504.5" shape-rendering="auto"/></g>
</svg>

<div class="a" style="left:169px;top:591px;width:834px;height:14px;background:linear-gradient(#ffffff 0 1px,#dcdcd6 1px 2px,#f6f6f4 2px 4px,#fbfbfd 4px 12px,#e4e2dc 12px 13px,#ffffff 13px)"></div>
<div class="a" style="left:169px;top:591px;width:15px;height:14px;border:1px solid #cfccc0;border-radius:2px;background:linear-gradient(#f6f5f0,#e4e1d4)"></div>
<svg class="a" style="left:173px;top:594px" width="6" height="8"><path d="M4.5,1 L1.5,4 L4.5,7" stroke="#303030" stroke-width="1.5" fill="none"/></svg>
<div class="a" style="left:988px;top:591px;width:15px;height:14px;border:1px solid #cfccc0;border-radius:2px;background:linear-gradient(#f6f5f0,#e4e1d4)"></div>
<svg class="a" style="left:993px;top:594px" width="6" height="8"><path d="M1.5,1 L4.5,4 L1.5,7" stroke="#303030" stroke-width="1.5" fill="none"/></svg>
<div class="a" style="left:556px;top:592px;width:225px;height:13px;border:1px solid #c4c0b0;border-radius:2px;background:linear-gradient(#f4f3ee,#ebe9e0 60%,#dedbcc)"></div>
<div class="a" style="left:664px;top:595px;width:9px;height:7px;background:repeating-linear-gradient(90deg,#a8a490 0 1px,transparent 1px 2px)"></div>

<div class="a" style="left:1003px;top:67px;width:7px;height:524px;background:linear-gradient(90deg,#f0efe8,#fdfdfb)"></div>
<div class="a" style="left:1004px;top:68px;width:10px;height:15px;border:1px solid #cfccc0;border-radius:2px;background:linear-gradient(90deg,#f6f5f0,#e4e1d4)"></div>
<svg class="a" style="left:1005px;top:72px" width="5" height="6"><polygon points="5,0.5 1,5 5,5" fill="#303030"/></svg>
<div class="a" style="left:1004px;top:576px;width:10px;height:15px;border:1px solid #cfccc0;border-radius:2px;background:linear-gradient(90deg,#f6f5f0,#e4e1d4)"></div>
<svg class="a" style="left:1005px;top:581px" width="5" height="6"><polygon points="5,5.5 1,1 5,1" fill="#303030"/></svg>
<div class="a" style="left:1004px;top:324px;width:10px;height:10px;border:1px solid #c4c0b0;border-radius:2px;background:#ebe9e0"></div>

<div class="a" style="left:169px;top:605px;width:841px;height:2px;background:#ffffff"></div>
<div class="a" style="left:169px;top:607px;width:841px;height:1px;background:#e4eef8"></div>
<div class="a" style="left:169px;top:608px;width:841px;height:1px;background:#a9b8cc"></div>
<div class="a" style="left:169px;top:609px;width:841px;height:3px;background:#dce6f2"></div>
<div class="a" style="left:169px;top:612px;width:841px;height:1px;background:#fafcfe"></div>
<div class="a" style="left:169px;top:613px;width:841px;height:2px;background:#8c8a80"></div>

<div class="a" style="left:169px;top:615px;width:835px;height:85px;background:#fff;border-left:1px solid #8c8a80"></div>
<div class="a" style="left:170px;top:615px;width:834px;height:14px;background:#fff"></div>
<div class="a lt" style="left:172px;top:616px">000000:00:03.120</div>
<div class="a lt" style="left:272px;top:616px">Зажигание включено.</div>
<div class="a" style="left:170px;top:629px;width:834px;height:14px;background:#fff"></div>
<div class="a lt" style="left:172px;top:630px">000000:00:08.820</div>
<div class="a lt" style="left:272px;top:630px">Запкск мотора.</div>
<div class="a" style="left:170px;top:643px;width:834px;height:14px;background:#fff"></div>
<div class="a lt" style="left:172px;top:644px">000000:00:33.880</div>
<div class="a lt" style="left:272px;top:644px">Хол. ход. на бензине.</div>
<div class="a" style="left:170px;top:657px;width:834px;height:14px;background:#fff"></div>
<div class="a lt" style="left:172px;top:658px">000000:01:12.720</div>
<div class="a lt" style="left:272px;top:658px">Дроссель открыт.</div>
<div class="a" style="left:170px;top:671px;width:834px;height:14px;background:#fff"></div>
<div class="a lt" style="left:172px;top:672px">000000:01:30.920</div>
<div class="a lt" style="left:272px;top:672px">Дроссель закрыт.</div>
<div class="a" style="left:170px;top:686px;width:834px;height:14px;background:#80ffff"></div>
<div class="a lt" style="left:172px;top:686px">000000:02:19.124</div>
<div class="a lt" style="left:272px;top:686px">Переключился на газ.</div>
<div class="a" style="left:170px;top:629px;width:834px;height:1px;background:#c4c4c4"></div>
<div class="a" style="left:170px;top:643px;width:834px;height:1px;background:#c4c4c4"></div>
<div class="a" style="left:170px;top:657px;width:834px;height:1px;background:#c4c4c4"></div>
<div class="a" style="left:170px;top:671px;width:834px;height:1px;background:#c4c4c4"></div>
<div class="a" style="left:170px;top:685px;width:834px;height:1px;background:#c4c4c4"></div>
<div class="a" style="left:269px;top:615px;width:1px;height:85px;background:#c4c4c4"></div>
<div class="a" style="left:1003px;top:615px;width:7px;height:85px;background:linear-gradient(90deg,#f0efe8,#fdfdfb)"></div>
<div class="a" style="left:1004px;top:615px;width:10px;height:15px;border:1px solid #cfccc0;border-radius:2px;background:linear-gradient(90deg,#f6f5f0,#e4e1d4)"></div>
<svg class="a" style="left:1005px;top:619px" width="5" height="6"><polygon points="5,0.5 1,5 5,5" fill="#303030"/></svg>
<div class="a" style="left:1004px;top:633px;width:10px;height:52px;border:1px solid #c4c0b0;border-radius:2px;background:linear-gradient(90deg,#f4f3ee,#e4e1d4)"></div>
<div class="a" style="left:1005px;top:656px;width:5px;height:7px;background:repeating-linear-gradient(#a8a490 0 1px,transparent 1px 2px)"></div>
<div class="a" style="left:1004px;top:685px;width:10px;height:15px;border:1px solid #cfccc0;border-radius:2px;background:linear-gradient(90deg,#f6f5f0,#e4e1d4)"></div>
<svg class="a" style="left:1005px;top:689px" width="5" height="6"><polygon points="5,5.5 1,1 5,1" fill="#303030"/></svg>

<div class="a" style="left:0;top:700px;width:1010px;height:14px;background:linear-gradient(#dcd9d2,#e2dfd9 30%,#e6e3de)"></div>
<div class="a" style="left:168px;top:700px;width:842px;height:1px;background:#f8faf0"></div>
<div class="a" style="left:0;top:700px;width:168px;height:1px;background:#aaa8a0"></div>
<div class="a" style="left:0;top:701px;width:1010px;height:1px;background:#fcfcfa"></div>
<div class="a" style="left:-1px;top:706px;font-size:11px;line-height:13px;color:#000;white-space:nowrap">Переместиться к предыдущей закладке (Shift+F2)</div>
<div class="a" style="left:689px;top:703px;width:1px;height:11px;background:#aca899"></div>
<div class="a" style="left:690px;top:703px;width:1px;height:11px;background:#fff"></div>
<div class="a" style="left:693px;top:706px;font-size:11px;line-height:13px;color:#000;white-space:nowrap">Полное время файла: 000000:03:57.376</div>

</body></html>
